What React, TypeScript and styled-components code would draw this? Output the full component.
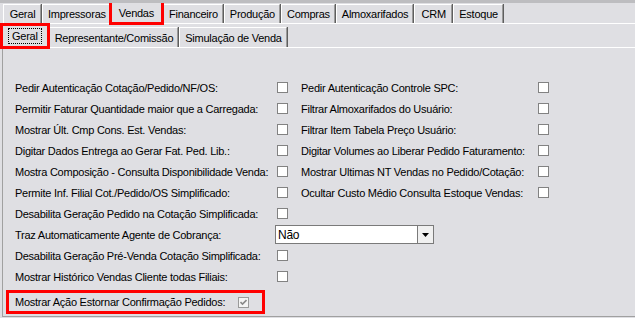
import React from "react";
import styled, { createGlobalStyle, css } from "styled-components";

const GlobalStyle = createGlobalStyle`
  html, body {
    margin: 0;
    padding: 0;
    background: #dfdfe3;
  }
  body {
    font-family: "Liberation Sans", Arial, sans-serif;
    font-size: 11px;
    letter-spacing: -0.25px;
    color: #000;
  }
`;

const Window = styled.div`
  width: 635px;
  height: 318px;
  box-sizing: border-box;
  overflow: hidden;
  display: flex;
  flex-direction: column;
  background: #dfdfe3;
  border-top: 3px solid #bdbdc0;
  padding-bottom: 1px;
`;

const TabRow = styled.div<{ $h: number }>`
  display: flex;
  align-items: flex-end;
  height: ${(p) => p.$h}px;
  padding-left: 3px;
  border-bottom: 1px solid #ffffff;
  flex-shrink: 0;
`;

const Tab = styled.div<{ $active?: boolean; $h: number }>`
  position: relative;
  height: ${(p) => p.$h}px;
  min-width: 27px;
  padding: 0 4px 0 5px;
  display: flex;
  align-items: center;
  justify-content: center;
  white-space: nowrap;
  background: #dfdfe3;
  border-top: 1px solid #ffffff;
  border-left: 1px solid #ffffff;
  border-right: 1px solid #9a9a9a;
  box-shadow: 1px 0 0 #5e5e5e;
  margin-right: 1px;

  ${(p) =>
    p.$active &&
    css`
      height: ${p.$h + 3}px;
      margin: 0 0 -1px -2px;
      padding: 0 8px 1px;
      z-index: 1;
      outline: 3px solid #ff0000;
      outline-offset: -2px;
    `}
`;

const FocusText = styled.span`
  outline: 1px dotted #000;
  outline-offset: 1px;
  padding: 0 2px;
`;

const Panel = styled.div`
  flex: 1;
  margin-left: 2px;
  border-left: 1px solid #a0a0a0;
  border-bottom: 1px solid #a0a0a0;
  padding: 29px 0 0 12px;
  display: flex;
  flex-direction: column;
`;

const Row = styled.div`
  display: grid;
  grid-template-columns: 262px 24px 237px 11px;
  align-items: center;
  height: 21px;
`;

const Label = styled.span`
  white-space: nowrap;
`;

const Box = styled.span<{ $disabled?: boolean }>`
  width: 11px;
  height: 11px;
  box-sizing: border-box;
  border: 1px solid ${(p) => (p.$disabled ? "#9a9a9a" : "#828282")};
  background: ${(p) => (p.$disabled ? "#f4f4f4" : "#ffffff")};
  display: flex;
  align-items: center;
  justify-content: center;
`;

const Select = styled.div`
  grid-column: 2 / 4;
  margin-left: -2px;
  width: 159px;
  height: 19px;
  box-sizing: border-box;
  border: 1px solid #7a7a7a;
  background: #ffffff;
  display: flex;
  align-items: center;
`;

const SelectValue = styled.span`
  flex: 1;
  padding-left: 2px;
  font-size: 12px;
`;

const SelectButton = styled.span`
  width: 15px;
  height: 100%;
  border-left: 1px solid #7a7a7a;
  background: #f0f0f0;
  display: flex;
  align-items: center;
  justify-content: center;
`;

const Highlight = styled.div`
  grid-column: 1 / 3;
  margin-left: -9px;
  margin-top: 3px;
  width: 259px;
  height: 24px;
  box-sizing: border-box;
  border: 3px solid #ff0000;
  padding-left: 6px;
  display: grid;
  grid-template-columns: 223px 11px;
  align-items: center;
`;

const Check: React.FC<{ checked?: boolean; disabled?: boolean }> = ({ checked, disabled }) => (
  <Box $disabled={disabled}>
    {checked && (
      <svg width="7" height="7" viewBox="0 0 7 7">
        <path d="M0.5 3 L2.5 5 L6.5 1" stroke="#8a8a8a" strokeWidth="1.6" fill="none" />
      </svg>
    )}
  </Box>
);

const mainTabs = ["Geral", "Impressoras", "Vendas", "Financeiro", "Produção", "Compras", "Almoxarifados", "CRM", "Estoque"];
const subTabs = ["Geral", "Representante/Comissão", "Simulação de Venda"];

const rows: [string, string | null][] = [
  ["Pedir Autenticação Cotação/Pedido/NF/OS:", "Pedir Autenticação Controle SPC:"],
  ["Permitir Faturar Quantidade maior que a Carregada:", "Filtrar Almoxarifados do Usuário:"],
  ["Mostrar Últ. Cmp Cons. Est. Vendas:", "Filtrar Item Tabela Preço Usuário:"],
  ["Digitar Dados Entrega ao Gerar Fat. Ped. Lib.:", "Digitar Volumes ao Liberar Pedido Faturamento:"],
  ["Mostra Composição - Consulta Disponibilidade Venda:", "Mostrar Ultimas NT Vendas no Pedido/Cotação:"],
  ["Permite Inf. Filial Cot./Pedido/OS Simplificado:", "Ocultar Custo Médio Consulta Estoque Vendas:"],
  ["Desabilita Geração Pedido na Cotação Simplificada:", null],
];

const moreRows = [
  "Desabilita Geração Pré-Venda Cotação Simplificada:",
  "Mostrar Histórico Vendas Cliente todas Filiais:",
];

const App: React.FC = () => {
  return (
    <>
      <GlobalStyle />
      <Window>
        <TabRow $h={20}>
          {mainTabs.map((t) => (
            <Tab key={t} $h={18} $active={t === "Vendas"}>
              {t}
            </Tab>
          ))}
        </TabRow>
        <TabRow $h={23}>
          {subTabs.map((t, i) => (
            <Tab key={t} $h={19} $active={i === 0}>
              {i === 0 ? <FocusText>{t}</FocusText> : t}
            </Tab>
          ))}
        </TabRow>
        <Panel>
          {rows.map(([left, right]) => (
            <Row key={left}>
              <Label>{left}</Label>
              <Check />
              {right && <Label>{right}</Label>}
              {right && <Check />}
            </Row>
          ))}
          <Row>
            <Label>Traz Automaticamente Agente de Cobrança:</Label>
            <Select>
              <SelectValue>Não</SelectValue>
              <SelectButton>
                <svg width="7" height="4" viewBox="0 0 7 4">
                  <path d="M0 0 H7 L3.5 4 Z" fill="#000" />
                </svg>
              </SelectButton>
            </Select>
          </Row>
          {moreRows.map((l) => (
            <Row key={l}>
              <Label>{l}</Label>
              <Check />
            </Row>
          ))}
          <Row>
            <Highlight>
              <Label>Mostrar Ação Estornar Confirmação Pedidos:</Label>
              <Check checked disabled />
            </Highlight>
          </Row>
        </Panel>
      </Window>
    </>
  );
};

export default App;
